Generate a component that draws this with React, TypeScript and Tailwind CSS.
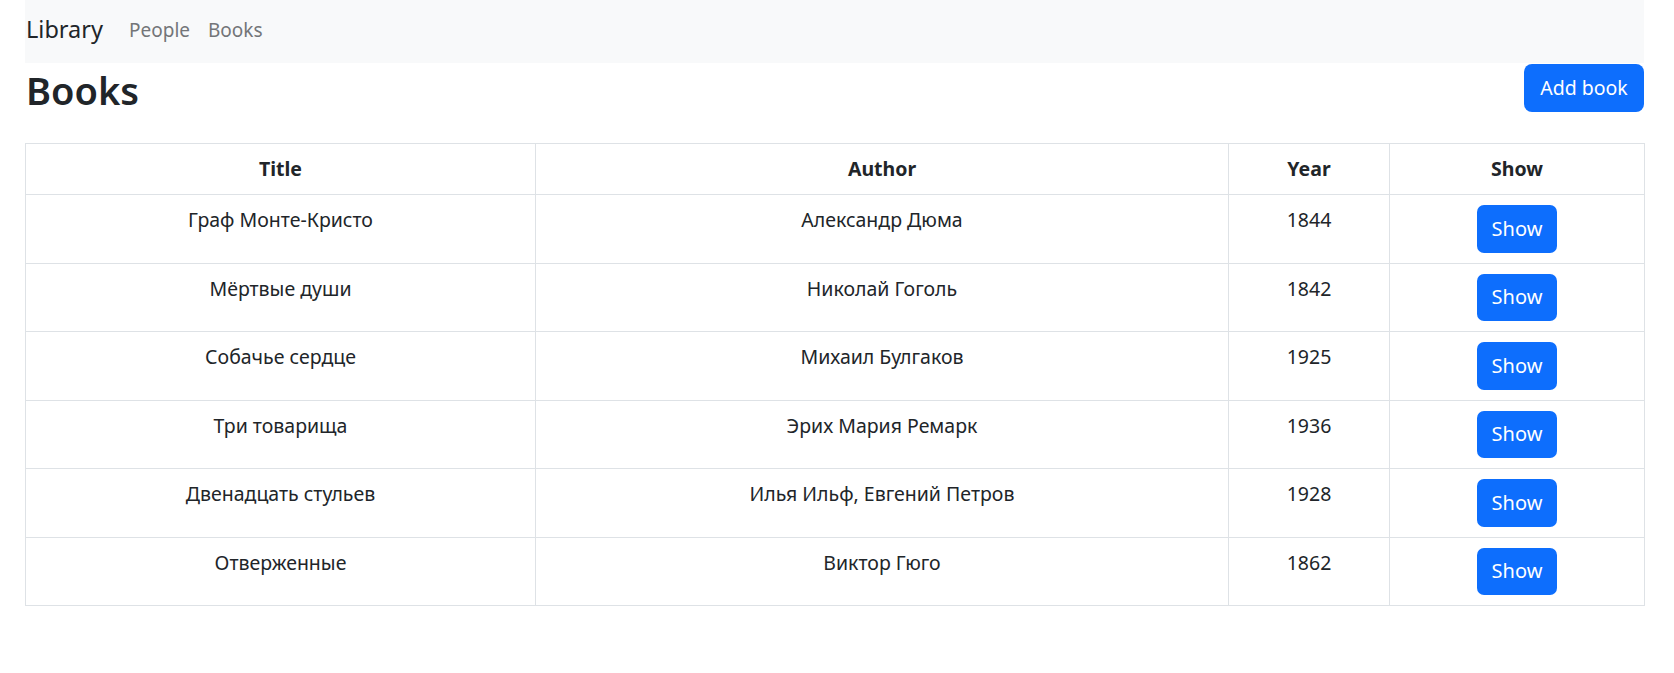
import React from "react";

const books = [
  { title: "Граф Монте-Кристо", author: "Александр Дюма", year: 1844 },
  { title: "Мёртвые души", author: "Николай Гоголь", year: 1842 },
  { title: "Собачье сердце", author: "Михаил Булгаков", year: 1925 },
  { title: "Три товарища", author: "Эрих Мария Ремарк", year: 1936 },
  { title: "Двенадцать стульев", author: "Илья Ильф, Евгений Петров", year: 1928 },
  { title: "Отверженные", author: "Виктор Гюго", year: 1862 },
];

export default function App() {
  return (
    <div
      className="min-h-[673px] bg-white text-[#212529]"
      style={{ fontFamily: '"Noto Sans", "Open Sans", Roboto, sans-serif' }}
    >
      <div className="ml-[25px] w-[1619px]">
        <nav className="flex h-[63px] items-center bg-[#f8f9fa] pb-[4px]">
          <span className="w-[104px] pl-[1px] text-[23.5px] leading-[37px] text-[#212529]">Library</span>
          <a className="w-[79px] text-[19px] leading-[30px] text-[#737578]">People</a>
          <a className="text-[19px] leading-[30px] text-[#737578]">Books</a>
        </nav>
        <div className="flex items-start justify-between">
          <h2 className="mt-[3px] pl-[1px] text-[38px] font-semibold leading-[48px]">Books</h2>
          <button className="mt-[1px] h-[48px] w-[120px] rounded-[8px] bg-[#0d6efd] text-[19.5px] text-white">
            Add book
          </button>
        </div>
        <table className="mt-[29px] w-[1619px] table-fixed border-collapse text-[19.5px] leading-[30px]">
          <colgroup>
            <col className="w-[510px]" />
            <col className="w-[693px]" />
            <col className="w-[161px]" />
            <col className="w-[255px]" />
          </colgroup>
          <thead>
            <tr>
              {["Title", "Author", "Year", "Show"].map((h) => (
                <th key={h} className="border border-[#dee2e6] px-[10px] py-[10px] text-center font-bold">
                  {h}
                </th>
              ))}
            </tr>
          </thead>
          <tbody>
            {books.map((b) => (
              <tr key={b.title}>
                <td className="border border-[#dee2e6] px-[10px] py-[10px] text-center align-top">{b.title}</td>
                <td className="border border-[#dee2e6] px-[10px] py-[10px] text-center align-top">{b.author}</td>
                <td className="border border-[#dee2e6] px-[10px] py-[10px] text-center align-top">{b.year}</td>
                <td className="border border-[#dee2e6] px-[10px] py-[10px] text-center align-top">
                  <button className="h-[47.5px] w-[80px] rounded-[7px] bg-[#0d6efd] text-[20px] leading-[30px] text-white">
                    Show
                  </button>
                </td>
              </tr>
            ))}
          </tbody>
        </table>
      </div>
    </div>
  );
}
